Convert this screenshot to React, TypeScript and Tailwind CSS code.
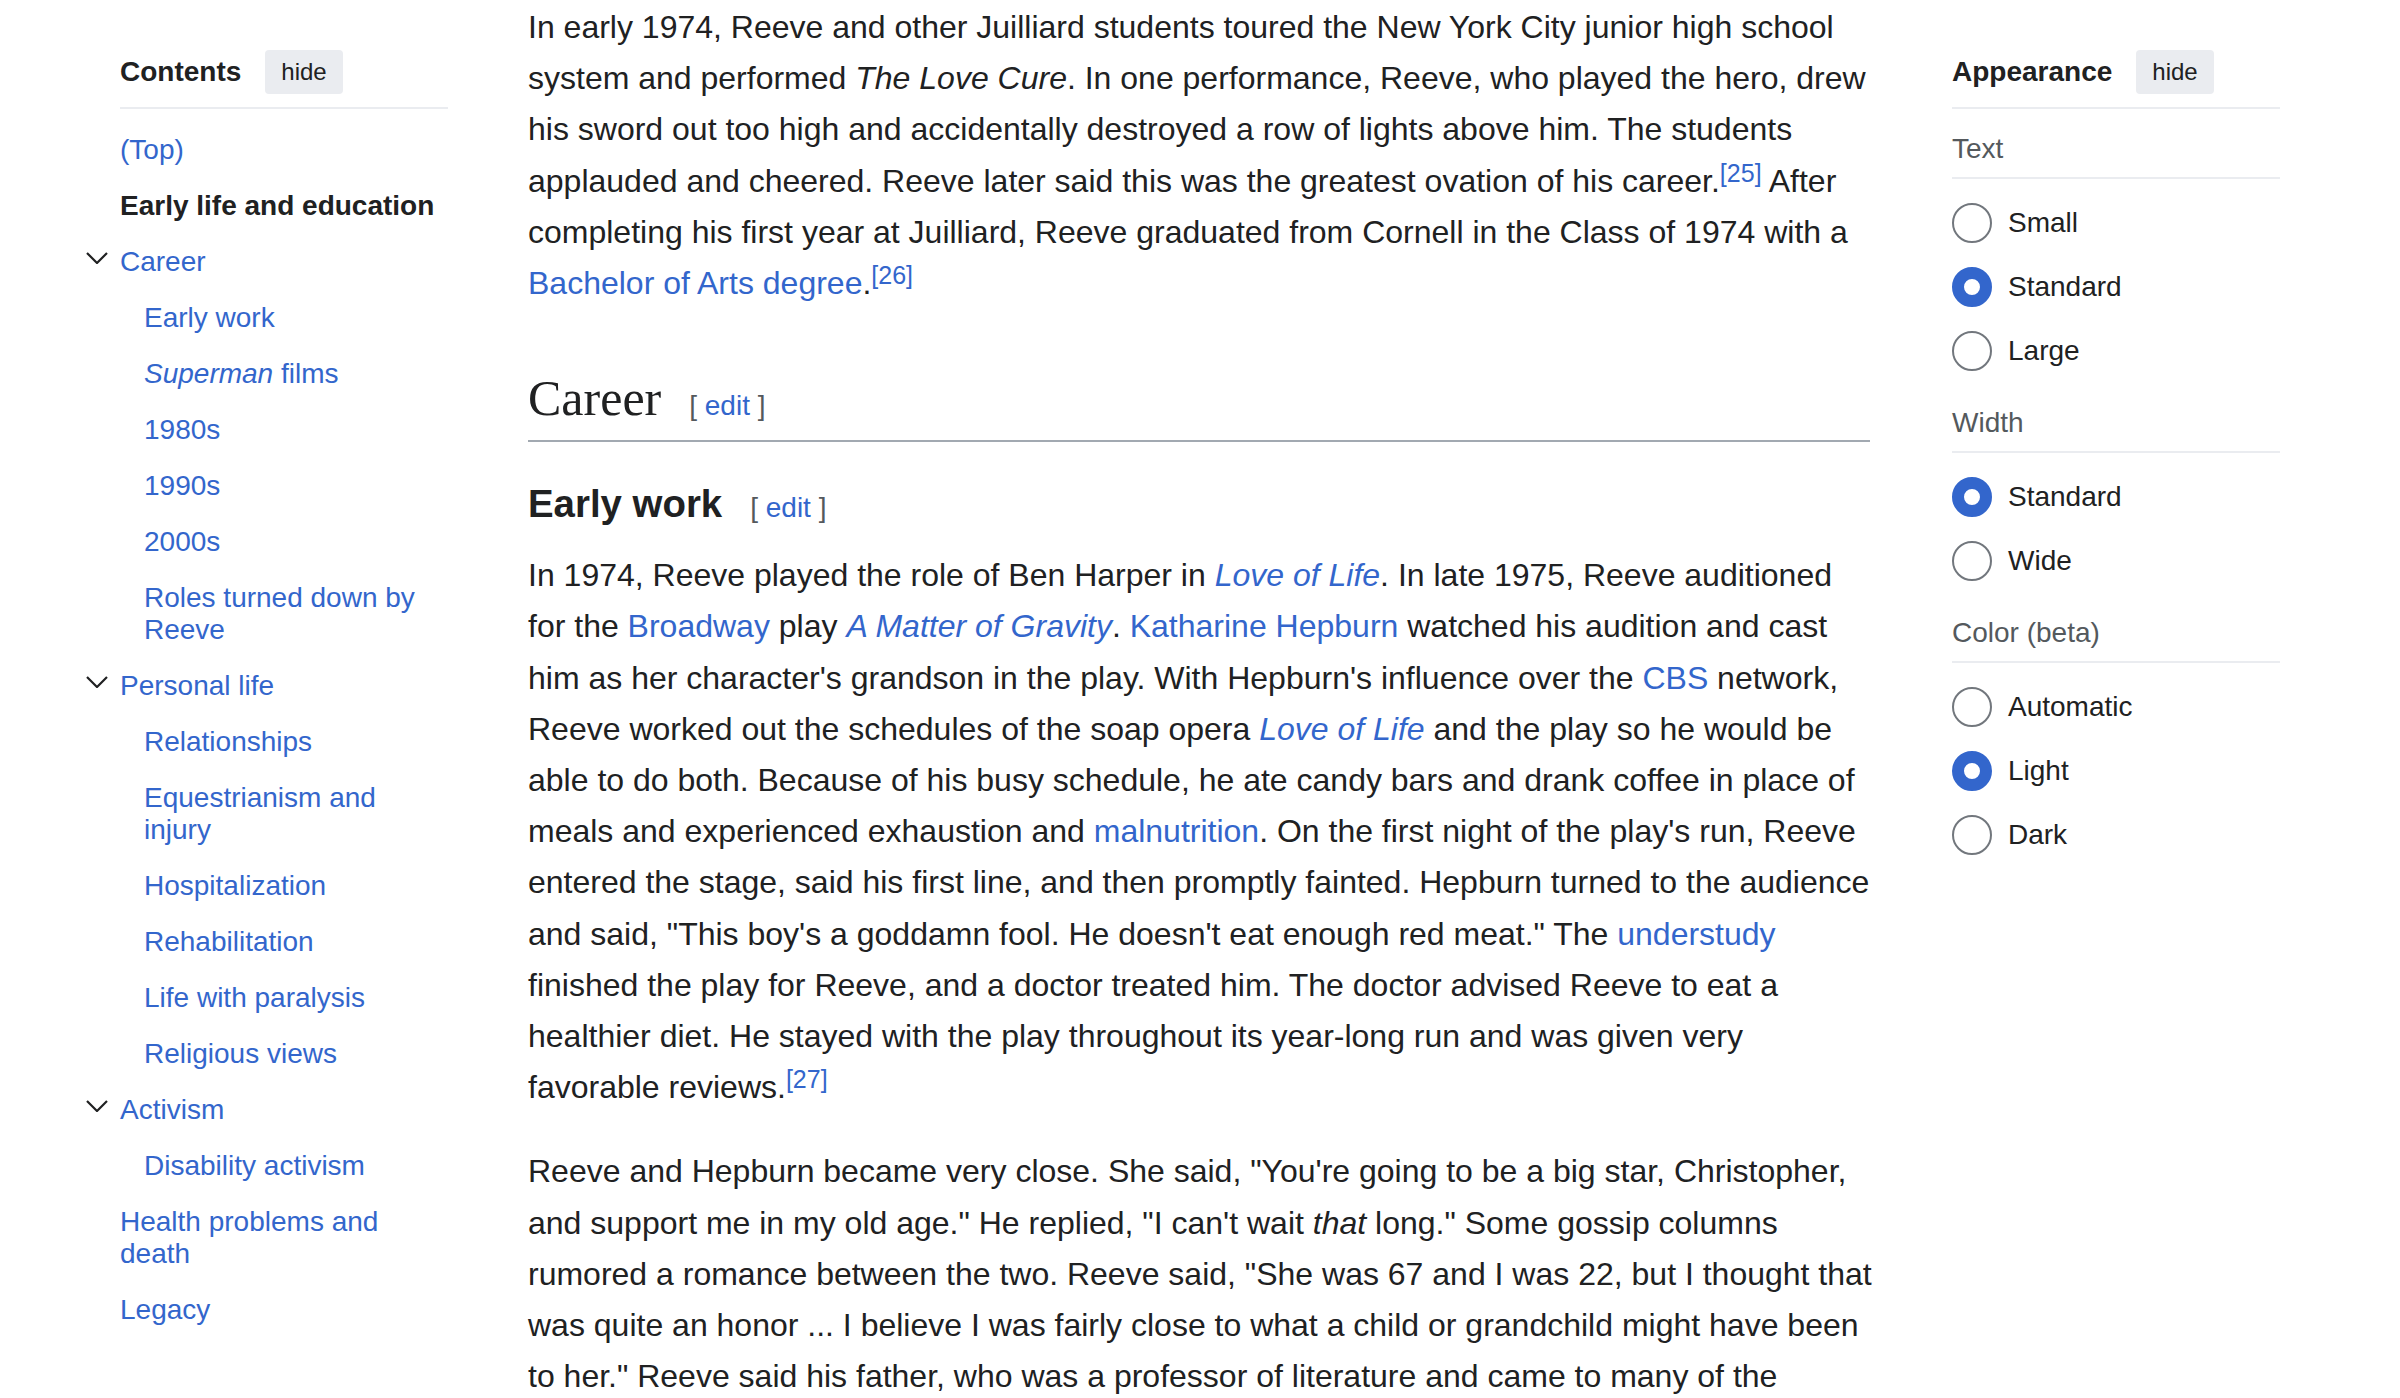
import React from "react";

const A = ({ children }: { children: React.ReactNode }) => (
  <a className="text-[#3366cc] no-underline">{children}</a>
);

const Ref = ({ n }: { n: number }) => (
  <span className="relative top-[-10px] text-[25px] leading-none text-[#3366cc]">[{n}]</span>
);

const Edit = () => (
  <span className="ml-[28px] font-['Liberation_Sans',Arial,sans-serif] text-[28px] font-normal leading-none text-[#54595d]">
    [ <span className="text-[#3366cc]">edit</span> ]
  </span>
);

const Chevron = () => (
  <svg width="22" height="12" viewBox="0 0 22 12" fill="none">
    <polyline points="1,1 11,11 21,1" stroke="#202122" strokeWidth="2.2" fill="none" />
  </svg>
);

type TocItem = { t: React.ReactNode; lvl: 1 | 2; chev?: boolean; active?: boolean };

const toc: TocItem[] = [
  { t: "(Top)", lvl: 1 },
  { t: "Early life and education", lvl: 1, active: true },
  { t: "Career", lvl: 1, chev: true },
  { t: "Early work", lvl: 2 },
  { t: (<><i>Superman</i> films</>), lvl: 2 },
  { t: "1980s", lvl: 2 },
  { t: "1990s", lvl: 2 },
  { t: "2000s", lvl: 2 },
  { t: (<>Roles turned down by<br />Reeve</>), lvl: 2 },
  { t: "Personal life", lvl: 1, chev: true },
  { t: "Relationships", lvl: 2 },
  { t: (<>Equestrianism and<br />injury</>), lvl: 2 },
  { t: "Hospitalization", lvl: 2 },
  { t: "Rehabilitation", lvl: 2 },
  { t: "Life with paralysis", lvl: 2 },
  { t: "Religious views", lvl: 2 },
  { t: "Activism", lvl: 1, chev: true },
  { t: "Disability activism", lvl: 2 },
  { t: (<>Health problems and<br />death</>), lvl: 1 },
  { t: "Legacy", lvl: 1 },
];

const HideBtn = () => (
  <button className="ml-[24px] flex h-[44px] items-center rounded-[4px] bg-[#eaecf0] px-[16px] text-[24px] text-[#202122]">
    hide
  </button>
);

const Radio = ({ label, on }: { label: string; on?: boolean }) => (
  <div className="flex h-[64px] items-center gap-[16px]">
    {on ? (
      <span className="box-border h-[40px] w-[40px] rounded-full border-[12px] border-[#3366cc] bg-white" />
    ) : (
      <span className="box-border h-[40px] w-[40px] rounded-full border-2 border-[#72777d] bg-white" />
    )}
    <span className="text-[28px] text-[#202122]">{label}</span>
  </div>
);

const Group = ({ title, items }: { title: string; items: [string, boolean][] }) => (
  <div>
    <div className="border-b-2 border-[#eaecf0] pb-[14px] pt-[26px] text-[28px] leading-[28px] text-[#54595d]">{title}</div>
    <div className="pt-[12px]">
      {items.map(([l, on]) => (
        <Radio key={l} label={l} on={on} />
      ))}
    </div>
  </div>
);

export default function App() {
  return (
    <div className="h-[1398px] w-[2400px] overflow-hidden bg-white font-['Liberation_Sans',Arial,sans-serif] text-[#202122]">
      <div className="flex">
        {/* Left TOC */}
        <div className="ml-[80px] w-[368px] shrink-0 pt-[50px]">
          <div className="flex h-[44px] items-center pl-[40px]">
            <span className="text-[28px] font-bold">Contents</span>
            <HideBtn />
          </div>
          <div className="ml-[40px] mt-[13px] h-[2px] bg-[#eaecf0]" />
          <div className="pt-[13px]">
            {toc.map((it, i) => (
              <div key={i} className="flex items-start">
                <div className="w-[40px] shrink-0 pl-[6px] pt-[18px]">{it.chev ? <Chevron /> : null}</div>
                <div
                  className={
                    "py-[12px] text-[28px] leading-[32px] " +
                    (it.lvl === 2 ? "pl-[24px] " : "") +
                    (it.active ? "font-bold text-[#202122]" : "text-[#3366cc]")
                  }
                >
                  {it.t}
                </div>
              </div>
            ))}
          </div>
        </div>

        {/* Main content */}
        <div className="ml-[80px] w-[1342px] shrink-0 pt-[2px] text-[32px] leading-[51.2px]">
          <p className="whitespace-nowrap">
            In early 1974, Reeve and other Juilliard students toured the New York City junior high school<br />
            system and performed <i>The Love Cure</i>. In one performance, Reeve, who played the hero, drew<br />
            his sword out too high and accidentally destroyed a row of lights above him. The students<br />
            applauded and cheered. Reeve later said this was the greatest ovation of his career.<Ref n={25} /> After<br />
            completing his first year at Juilliard, Reeve graduated from Cornell in the Class of 1974 with a<br />
            <A>Bachelor of Arts degree</A>.<Ref n={26} />
          </p>

          <h2 className="mt-[57px] border-b-2 border-[#a2a9b1] pb-[9px] font-['Liberation_Serif','Times_New_Roman',serif] text-[50px] font-normal leading-[65px] text-[#202122]">
            Career
            <Edit />
          </h2>

          <h3 className="mt-[38px] text-[38.4px] font-bold leading-[48px] text-[#202122]">
            Early work
            <Edit />
          </h3>

          <p className="mt-[22px] whitespace-nowrap">
            In 1974, Reeve played the role of Ben Harper in <i><A>Love of Life</A></i>. In late 1975, Reeve auditioned<br />
            for the <A>Broadway</A> play <i><A>A Matter of Gravity</A></i>. <A>Katharine Hepburn</A> watched his audition and cast<br />
            him as her character's grandson in the play. With Hepburn's influence over the <A>CBS</A> network,<br />
            Reeve worked out the schedules of the soap opera <i><A>Love of Life</A></i> and the play so he would be<br />
            able to do both. Because of his busy schedule, he ate candy bars and drank coffee in place of<br />
            meals and experienced exhaustion and <A>malnutrition</A>. On the first night of the play's run, Reeve<br />
            entered the stage, said his first line, and then promptly fainted. Hepburn turned to the audience<br />
            and said, "This boy's a goddamn fool. He doesn't eat enough red meat." The <A>understudy</A><br />
            finished the play for Reeve, and a doctor treated him. The doctor advised Reeve to eat a<br />
            healthier diet. He stayed with the play throughout its year-long run and was given very<br />
            favorable reviews.<Ref n={27} />
          </p>

          <p className="mt-[33px] whitespace-nowrap">
            Reeve and Hepburn became very close. She said, "You're going to be a big star, Christopher,<br />
            and support me in my old age." He replied, "I can't wait <i>that</i> long." Some gossip columns<br />
            rumored a romance between the two. Reeve said, "She was 67 and I was 22, but I thought that<br />
            was quite an honor ... I believe I was fairly close to what a child or grandchild might have been<br />
            to her." Reeve said his father, who was a professor of literature and came to many of the
          </p>
        </div>

        {/* Right panel */}
        <div className="ml-[82px] w-[328px] shrink-0 pt-[50px]">
          <div className="flex h-[44px] items-center">
            <span className="text-[28px] font-bold">Appearance</span>
            <HideBtn />
          </div>
          <div className="mt-[13px] h-[2px] bg-[#eaecf0]" />
          <Group title="Text" items={[["Small", false], ["Standard", true], ["Large", false]]} />
          <Group title="Width" items={[["Standard", true], ["Wide", false]]} />
          <Group title="Color (beta)" items={[["Automatic", false], ["Light", true], ["Dark", false]]} />
        </div>
      </div>
    </div>
  );
}
